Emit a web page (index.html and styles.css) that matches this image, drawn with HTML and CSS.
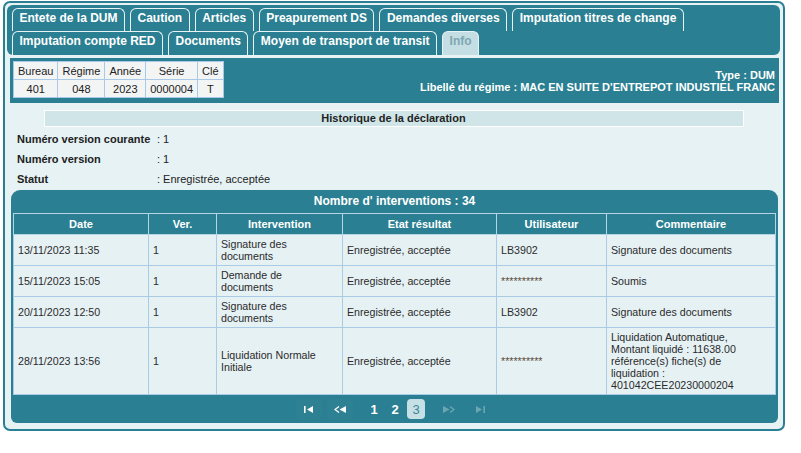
FILE: index.html
```html
<!DOCTYPE html>
<html lang="fr">
<head>
<meta charset="utf-8">
<title>DUM - Info</title>
<link rel="stylesheet" href="styles.css">
</head>
<body>
<div class="frame">
  <div class="tabs">
    <div class="tab-row">
      <span class="tab">Entete de la DUM</span>
      <span class="tab">Caution</span>
      <span class="tab">Articles</span>
      <span class="tab">Preapurement DS</span>
      <span class="tab">Demandes diverses</span>
      <span class="tab">Imputation titres de change</span>
    </div>
    <div class="tab-row">
      <span class="tab">Imputation compte RED</span>
      <span class="tab">Documents</span>
      <span class="tab">Moyen de transport de transit</span>
      <span class="tab active">Info</span>
    </div>
  </div>

  <div class="infobar">
    <table class="ref">
      <tr><td>Bureau</td><td>Régime</td><td>Année</td><td>Série</td><td>Clé</td></tr>
      <tr><td>401</td><td>048</td><td>2023</td><td>0000004</td><td>T</td></tr>
    </table>
    <div class="type">
      <div>Type : DUM</div>
      <div>Libellé du régime : MAC EN SUITE D'ENTREPOT INDUSTIEL FRANC</div>
    </div>
  </div>

  <div class="histo">Historique de la déclaration</div>

  <div class="fields">
    <div class="field"><span class="lbl">Numéro version courante</span><span>: 1</span></div>
    <div class="field"><span class="lbl">Numéro version</span><span>: 1</span></div>
    <div class="field"><span class="lbl">Statut</span><span>: Enregistrée, acceptée</span></div>
  </div>

  <div class="panel">
    <div class="panel-head">Nombre d' interventions : 34</div>
    <table class="grid">
      <colgroup>
        <col class="c1"><col class="c2"><col class="c3"><col class="c4"><col class="c5"><col class="c6">
      </colgroup>
      <thead>
        <tr><th>Date</th><th>Ver.</th><th>Intervention</th><th>Etat résultat</th><th>Utilisateur</th><th>Commentaire</th></tr>
      </thead>
      <tbody>
        <tr><td>13/11/2023 11:35</td><td>1</td><td class="wrap">Signature des documents</td><td>Enregistrée, acceptée</td><td>LB3902</td><td class="comment">Signature des documents</td></tr>
        <tr><td>15/11/2023 15:05</td><td>1</td><td class="wrap">Demande de documents</td><td>Enregistrée, acceptée</td><td class="stars">**********</td><td class="comment">Soumis</td></tr>
        <tr><td>20/11/2023 12:50</td><td>1</td><td class="wrap">Signature des documents</td><td>Enregistrée, acceptée</td><td>LB3902</td><td class="comment">Signature des documents</td></tr>
        <tr><td>28/11/2023 13:56</td><td>1</td><td class="wrap">Liquidation Normale Initiale</td><td>Enregistrée, acceptée</td><td class="stars">**********</td><td class="comment">Liquidation Automatique, Montant liquidé : 11638.00 référence(s) fiche(s) de liquidation : 401042CEE20230000204</td></tr>
      </tbody>
    </table>
    <div class="pager">
      <span class="pbtn"><svg width="10" height="7" viewBox="0 0 10 7"><rect x="0" y="0" width="1.6" height="7" fill="#fff"/><path d="M9 0 L3 3.5 L9 7 Z" fill="#fff"/></svg></span>
      <span class="pbtn gap-after"><svg width="12" height="7" viewBox="0 0 12 7"><path d="M5 0.5 L1 3.5 L5 6.5" fill="none" stroke="#fff" stroke-width="1.3"/><path d="M12 0 L5.5 3.5 L12 7 Z" fill="#fff"/></svg></span>
      <span class="pnum">1</span>
      <span class="pnum">2</span>
      <span class="pnum cur">3</span>
      <span class="pbtn dim gap-before"><svg width="12" height="7" viewBox="0 0 12 7"><path d="M0 0 L6.5 3.5 L0 7 Z" fill="#fff"/><path d="M7 0.5 L11 3.5 L7 6.5" fill="none" stroke="#fff" stroke-width="1.3"/></svg></span>
      <span class="pbtn dim"><svg width="10" height="7" viewBox="0 0 10 7"><path d="M1 0 L7 3.5 L1 7 Z" fill="#fff"/><rect x="8.4" y="0" width="1.6" height="7" fill="#fff"/></svg></span>
    </div>
  </div>
</div>
</body>
</html>
```

FILE: styles.css
```css
html, body {
  margin: 0;
  padding: 0;
  background: #ffffff;
}

body {
  font-family: "Liberation Sans", Arial, sans-serif;
  color: #222;
}

.frame {
  margin: 1px 0 0 3px;
  width: 782px;
  height: 430px;
  box-sizing: border-box;
  border: 2px solid #2b7f92;
  border-radius: 7px;
  padding: 2px 3px 0 2px;
  background: #e6f2f4;
}

/* tabs header */
.tabs {
  background: #2b7f92;
  border-radius: 6px;
  padding: 3px 5px 0 5px;
  display: flex;
  flex-direction: column;
  height: 50px;
  box-sizing: border-box;
}

.tab-row {
  display: flex;
  gap: 5px;
}

.tab {
  display: block;
  border: 1px solid #e8f3f5;
  border-bottom: none;
  border-radius: 6px 6px 0 0;
  padding: 2px 6.5px 5px 6.5px;
  font-size: 12px;
  line-height: 15px;
  font-weight: bold;
  color: #ffffff;
}

.tab.active {
  background: #c4dee4;
  color: #7ea7b2;
  padding-bottom: 6px;
}

/* ref info bar */
.infobar {
  margin: 3px 1px 0 3px;
  height: 45px;
  box-sizing: border-box;
  background: #2b7f92;
  padding: 3px 4px 3px 3px;
  display: flex;
  justify-content: space-between;
  align-items: flex-start;
}

.ref {
  border-collapse: collapse;
  background: #f3f4f4;
  font-size: 11px;
  color: #222;
}

.ref td {
  border: 1px solid #a9c9e6;
  text-align: center;
  height: 17px;
  padding: 0 4px;
}

.type {
  text-align: right;
  color: #ffffff;
  font-weight: bold;
  font-size: 11px;
  line-height: 12px;
  padding-top: 8px;
}

/* historique */
.histo {
  width: 700px;
  margin: 7px auto 0 auto;
  box-sizing: border-box;
  border: 1px solid #ffffff;
  background: #cfe5e8;
  text-align: center;
  font-size: 11px;
  font-weight: bold;
  line-height: 15px;
  height: 17px;
}

.fields {
  padding: 2px 0 0 10px;
}

.field {
  display: flex;
  height: 20px;
  align-items: center;
  font-size: 11px;
}

.lbl {
  width: 140px;
  font-weight: bold;
}

/* interventions */
.panel {
  margin: 1px 2px 0 4px;
  background: #2b7f92;
  border-radius: 9px 9px 6px 6px;
  padding: 0 2px;
}

.panel-head {
  height: 22px;
  line-height: 22px;
  text-align: center;
  color: #ffffff;
  font-weight: bold;
  font-size: 12px;
  margin-bottom: 1px;
}

.grid {
  width: 100%;
  border-collapse: collapse;
  border: 1px solid #a9cbe6;
  table-layout: fixed;
}

.c1 { width: 135px; }
.c2 { width: 68px; }
.c3 { width: 126px; }
.c4 { width: 154px; }
.c5 { width: 110px; }
.c6 { width: auto; }

.grid th {
  background: #2b7f92;
  color: #ffffff;
  font-size: 11px;
  font-weight: bold;
  border: 1px solid #b6d5e4;
  height: 20px;
  padding: 0;
}

.grid td {
  background: #e6f1f4;
  border: 1px solid #a9cbe6;
  font-size: 10.67px;
  line-height: 12px;
  color: #2b2b2b;
  padding: 3px 4px 3px 4px;
  height: 24px;
  vertical-align: middle;
}

.grid td.wrap {
  padding-left: 4px;
  padding-right: 12px;
}

.grid td.comment {
  padding-right: 22px;
}

.grid td.stars {
  font-size: 10.67px;
  color: #5a4a3a;
}

.pager {
  height: 28px;
  display: flex;
  align-items: center;
  justify-content: center;
  gap: 3px;
}

.pbtn {
  display: flex;
  align-items: center;
  justify-content: center;
  width: 26px;
  height: 21px;
  border-radius: 5px;
  background: rgba(255, 255, 255, 0.015);
  margin: 0 1px;
}

.pbtn.gap-after {
  margin-right: 9px;
}

.pbtn.gap-before {
  margin-left: 8px;
}

.pbtn.dim {
  opacity: 0.3;
}

.pnum {
  display: flex;
  align-items: center;
  justify-content: center;
  width: 18px;
  height: 20px;
  color: #ffffff;
  font-weight: bold;
  font-size: 13px;
}

.pnum.cur {
  background: #c6e0e5;
  color: #3c8698;
  font-weight: normal;
  border-radius: 4px;
}
```
